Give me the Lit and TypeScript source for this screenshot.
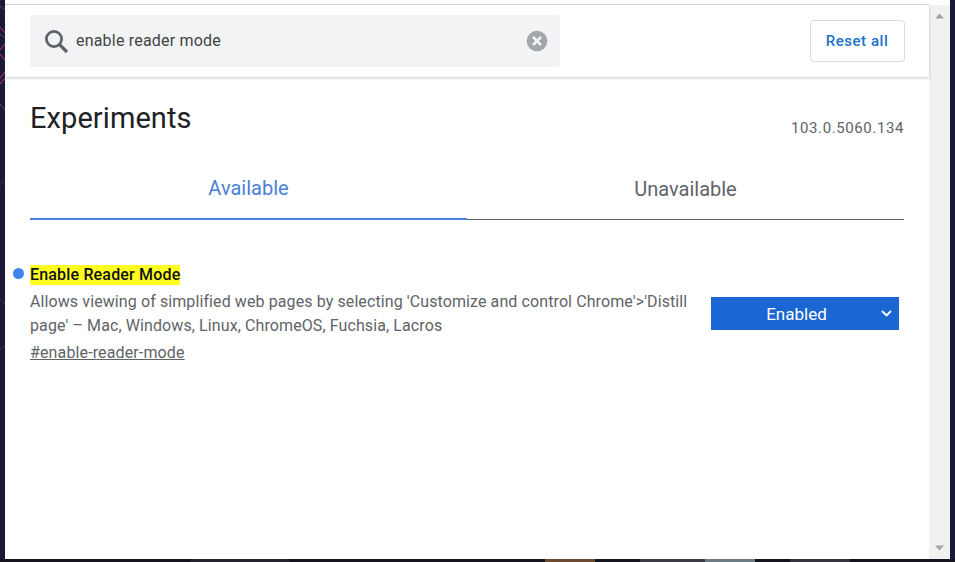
import { LitElement, html, css, svg } from "lit";
import { customElement } from "lit/decorators.js";

@customElement("app-root")
export class AppRoot extends LitElement {
  static styles = css`
    :host { display: block; width: 955px; height: 562px; position: relative; overflow: hidden; background: #1a1a36; font-family: Roboto, "Liberation Sans", sans-serif; }
    .wallpaper { position: absolute; inset: 0; width: 955px; height: 562px; }
    .frame { position: relative; height: 562px; box-sizing: border-box; padding: 0 5px 3px 5px; display: flex; }
    .window { flex: 1; display: flex; min-width: 0; background: #fff; }
    .page { flex: 1; min-width: 0; display: flex; flex-direction: column; }
    .top-rule { height: 5px; box-sizing: border-box; background: #fff; border-bottom: 1px solid #d6d6d6; flex: none; }
    .header { flex: none; height: 72px; box-sizing: border-box; padding: 10px 24px 0 25px; display: flex; justify-content: space-between; align-items: flex-start; box-shadow: 0 1px 3px rgba(60,64,67,.28); position: relative; }
    .search { width: 530px; height: 52px; background: #f1f3f4; border-radius: 2px; display: flex; align-items: center; box-sizing: border-box; padding: 0 12px 2px 12px; }
    .search svg.mag { width: 28px; height: 28px; flex: none; margin-top: 2px; }
    .query { flex: 1; margin-left: 6px; font-size: 16px; color: #444; letter-spacing: .2px; }
    .search svg.clear { width: 22px; height: 22px; flex: none; margin-top: 2px; }
    .reset { margin: 5px 0 0; width: 95px; height: 42px; box-sizing: border-box; border: 1px solid #dadce0; border-radius: 4px; background: #fff; color: #1a73c8; font: 500 15px Roboto, "Liberation Sans", sans-serif; letter-spacing: .55px; padding: 0 1px 0 0; }
    .content { flex: 1; padding: 0 25px; }
    .title-row { display: flex; justify-content: space-between; align-items: flex-start; height: 83px; }
    h1 { margin: 0; padding-top: 23px; font-size: 29px; line-height: 36px; font-weight: 400; color: #202124; letter-spacing: .08px; }
    .version { padding-top: 41px; line-height: 20px; font-size: 15px; color: #5f6368; letter-spacing: .6px; }
    .tabs { display: grid; grid-template-columns: 437px 437px; height: 60px; }
    .tab { display: flex; align-items: center; justify-content: center; font-size: 20px; height: 60px; padding-bottom: 1px; box-sizing: border-box; border-bottom: 1px solid #5f6368; color: #5f6368; }
    .tab.on { padding-bottom: 2px; border-bottom: 2px solid #4a7fd8; color: #4a7fd8; }
    .flag { display: flex; margin-top: 45px; position: relative; }
    .dot { position: absolute; left: -17px; top: 3px; width: 11px; height: 11px; border-radius: 50%; background: #3f83ee; }
    .text { width: 667px; }
    .name { display: inline-block; font-size: 16px; font-weight: 500; line-height: 20px; color: #111; background: #ffff22; letter-spacing: .17px; }
    .desc { margin: 5px 0 0; font-size: 16px; line-height: 24px; color: #5f6368; letter-spacing: .1px; }
    .link { display: inline-block; margin-top: 5px; font-size: 16px; line-height: 20px; color: #5f6368; text-decoration: underline; letter-spacing: .13px; }
    .select { margin: 32px 0 0 14px; width: 188px; height: 33px; background: #1a66d2; color: #fff; font-size: 17px; position: relative; display: flex; align-items: center; justify-content: center; padding-right: 17px; box-sizing: border-box; }
    .select svg { position: absolute; right: 7px; top: 13px; width: 11px; height: 7px; }
    .scroll { flex: none; width: 21px; background: #f1f1f1; border-top: 5px solid #fff; box-sizing: border-box; display: flex; flex-direction: column; justify-content: space-between; align-items: center; padding: 8px 0 8px; }
    .scroll svg { width: 9px; height: 6px; display: block; }
  `;

  render() {
    return html`
      <svg class="wallpaper" viewBox="0 0 955 562">
        ${svg`<g fill="none" stroke-width="1">
          <path d="M0 27 L5 33 M0 50 L5 44 M0 54 L5 60 M0 78 L5 72 M0 84 L5 78" stroke="#c83a70"/>
          <path d="M0 6 L5 10 M0 34 L5 38 M0 104 L5 110" stroke="#7e3470"/>
          <path d="M0 185 L5 180 M0 300 L5 304 M0 350 L5 346" stroke="#38305a"/>
        </g>
        <g>
          <rect x="0" y="559" width="955" height="3" fill="#14141f"/>
          <rect x="190" y="559" width="100" height="3" fill="#24242c"/>
          <rect x="545" y="559" width="50" height="3" fill="#6e4a30"/>
          <rect x="640" y="559" width="70" height="3" fill="#3c3c44"/>
          <rect x="705" y="559" width="50" height="3" fill="#6c7a84"/>
          <rect x="790" y="559" width="60" height="3" fill="#34343e"/>
        </g>`}
      </svg>
      <div class="frame">
        <div class="window">
          <div class="page">
            <div class="top-rule"></div>
            <div class="header">
              <div class="search">
                <svg class="mag" viewBox="0 0 28 28"><circle cx="12" cy="12" r="7.6" fill="none" stroke="#5f6368" stroke-width="2.8"/><path d="M17.6 17.6 L25 25" stroke="#5f6368" stroke-width="3.2" fill="none"/></svg>
                <span class="query">enable reader mode</span>
                <svg class="clear" viewBox="0 0 22 22"><circle cx="11" cy="11" r="10.3" fill="#a3a6aa"/><path d="M7 7 L15 15 M15 7 L7 15" stroke="#f1f3f4" stroke-width="2.5"/></svg>
              </div>
              <button class="reset">Reset all</button>
            </div>
            <div class="content">
              <div class="title-row">
                <h1>Experiments</h1>
                <span class="version">103.0.5060.134</span>
              </div>
              <div class="tabs">
                <div class="tab on">Available</div>
                <div class="tab">Unavailable</div>
              </div>
              <div class="flag">
                <span class="dot"></span>
                <div class="text">
                  <span class="name">Enable Reader Mode</span>
                  <p class="desc">Allows viewing of simplified web pages by selecting 'Customize and control Chrome'&gt;'Distill page' – Mac, Windows, Linux, ChromeOS, Fuchsia, Lacros</p>
                  <a class="link">#enable-reader-mode</a>
                </div>
                <div class="select">Enabled
                  <svg viewBox="0 0 11 7"><path d="M1 1 L5.5 5.5 L10 1" fill="none" stroke="#fff" stroke-width="1.9"/></svg>
                </div>
              </div>
            </div>
          </div>
          <div class="scroll">
            <svg viewBox="0 0 9 5"><path d="M4.5 0 L9 5 L0 5 Z" fill="#a3a3a3"/></svg>
            <svg viewBox="0 0 9 5"><path d="M0 0 L9 0 L4.5 5 Z" fill="#a3a3a3"/></svg>
          </div>
        </div>
      </div>
    `;
  }
}
